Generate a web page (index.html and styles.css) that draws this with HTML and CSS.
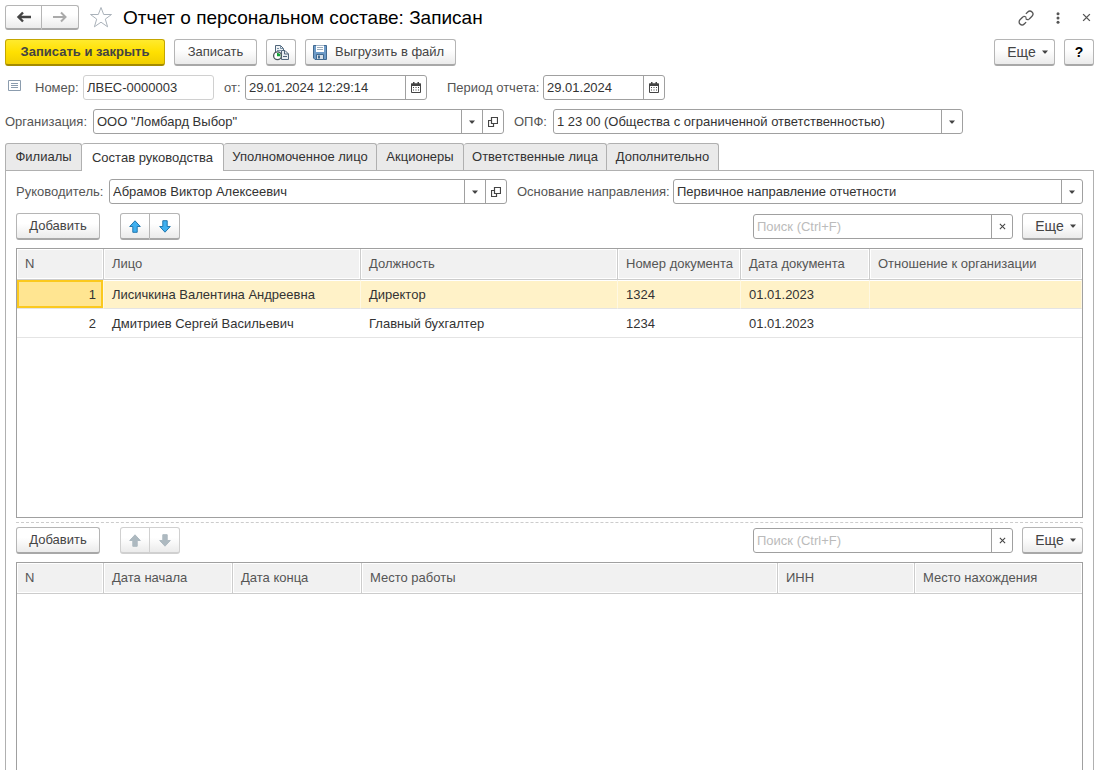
FILE: index.html
```html
<!DOCTYPE html>
<html lang="ru">
<head>
<meta charset="utf-8">
<meta name="viewport" content="width=device-width, initial-scale=1">
<title>Отчет о персональном составе</title>
<link rel="stylesheet" href="styles.css">
</head>
<body>
<svg class="sprite" aria-hidden="true">
  <symbol id="i-back" viewBox="0 0 16 12"><path d="M15 6H3M7 1.5 2.5 6 7 10.500" fill="none" stroke="currentColor" stroke-width="2.400"/></symbol>
  <symbol id="i-forward" viewBox="0 0 16 12"><path d="M1 6h12M9 1.500 13.500 6 9 10.500" fill="none" stroke="currentColor" stroke-width="2"/></symbol>
  <symbol id="i-caret" viewBox="0 0 6 4"><path d="M0 0.500h6L3.500 3.500h-1z" fill="currentColor"/></symbol>
  <symbol id="i-calendar" viewBox="0 0 10 11"><path d="M.5 2h9v8.500h-9z" fill="none" stroke="currentColor"/><path d="M0 1.500h10V4H0zM2 0h1.500v2H2zM6.500 0H8v2H6.500z" fill="currentColor"/><path d="M2 5h1v1H2zm2.500 0h1v1h-1zM7 5h1v1H7zM2 7.500h1v1H2zm2.500 0h1v1h-1zm2.500 0h1v1H7z" fill="currentColor"/></symbol>
  <symbol id="i-open" viewBox="0 0 10 10"><path d="M3.500.500h6v6h-6zM3.500 3.500h-3v6h5v-3" fill="none" stroke="currentColor" stroke-width="1.200"/></symbol>
  <symbol id="i-close" viewBox="0 0 8 8"><path d="m1 1 6 6m0-6L1 7" fill="none" stroke="currentColor" stroke-width="1.200"/></symbol>
  <symbol id="i-up" viewBox="0 0 12 13"><path d="M6 .8 11.300 6.500H8.200v5.800H3.800V6.500H.7z" stroke-width="1"/></symbol>
  <symbol id="i-down" viewBox="0 0 12 13"><path d="M6 12.200 11.300 6.500H8.200V.7H3.800v5.800H.7z" stroke-width="1"/></symbol>
</svg>

<main class="form">
  <header class="titlebar">
    <div class="pair">
      <button class="btn" type="button" aria-label="Назад"><svg class="arrow"><use href="#i-back"/></svg></button>
      <button class="btn faded" type="button" aria-label="Вперед"><svg class="arrow"><use href="#i-forward"/></svg></button>
    </div>
    <button class="ghost star" type="button" aria-label="Избранное"><svg width="24" height="23" viewBox="0 0 24 23"><path d="m12 1.500 2.700 7h7.800l-6.200 4.600 2.300 7.700L12 16.200l-6.600 4.600 2.300-7.700L1.500 8.500h7.800z" fill="#fff" stroke="#aab2ba"/></svg></button>
    <h1>Отчет о персональном составе: Записан</h1>
    <div class="window-tools">
      <button class="ghost" type="button" aria-label="Ссылка"><svg width="16" height="16" viewBox="0 0 16 16"><g transform="rotate(-45 8 8)" fill="none" stroke="#555" stroke-width="1.300"><path d="M6.800 5H2.500a3 3 0 0 0 0 6h2.700M7 5a2.800 2.800 0 0 1 1.500 3M9.200 11h4.300a3 3 0 0 0 0-6h-2.700M9 11a2.800 2.800 0 0 1-1.500-3"/></g></svg></button>
      <button class="ghost" type="button" aria-label="Меню"><svg width="4" height="12" viewBox="0 0 4 12" fill="#555"><circle cx="2" cy="1.700" r="1.500"/><circle cx="2" cy="6" r="1.500"/><circle cx="2" cy="10.300" r="1.500"/></svg></button>
      <button class="ghost" type="button" aria-label="Закрыть"><svg width="9" height="9"><use href="#i-close"/></svg></button>
    </div>
  </header>

  <div class="toolbar main-tools">
    <button class="btn primary" type="button">Записать и закрыть</button>
    <button class="btn write" type="button">Записать</button>
    <button class="btn square" type="button" aria-label="Отчеты"><svg width="18" height="17" viewBox="0 0 18 17"><path d="M3.500 10V1.500h5l3 3V13" fill="#eef2f5" stroke="#50657a"/><path d="M8.500 1.500v3h3M5 4.500h2M5 6.500h4" fill="none" stroke="#7890a5"/><path d="M9.500 6.500h3.500l3.500 3.500v5.500H9.500z" fill="#e7edf2" stroke="#50657a"/><path d="M12.500 6.500V10h4M11 12.500h4" fill="none" stroke="#50657a"/><circle cx="5.500" cy="11.800" r="3.900" fill="#fff" stroke="#4a555c" stroke-width="1.300"/><path d="M5 9h1a2.800 2.800 0 0 1 2.300 3.300H5z" fill="#13a538"/></svg></button>
    <button class="btn export" type="button"><svg width="14" height="15" viewBox="0 0 14 15"><path d="M.5.500h13v14H2L.5 13z" fill="#6d9bc8" stroke="#41698f"/><path d="M3 .5h8V7H3z" fill="#fff"/><path d="M4 2.500h6M4 4.500h6" stroke="#9aabba"/><path d="M3.500 9.500h7v5h-7z" fill="#d7dfe6" stroke="#41698f"/><path d="M5 10.500h2v3H5z" fill="#41698f"/></svg>Выгрузить в файл</button>
    <button class="btn more push" type="button">Еще<svg class="caret"><use href="#i-caret"/></svg></button>
    <button class="btn square help" type="button">?</button>
  </div>

  <div class="row">
    <svg class="note" width="14" height="12" viewBox="0 0 14 12"><path d="M.5.500h12v10H.5z" fill="#fff" stroke="#8b9cae"/><path d="M3 3.500h7M3 5.500h7M3 7.500h7" stroke="#8b9cae"/></svg>
    <label class="label-number" for="number">Номер:</label>
    <div class="field plain number"><input id="number" value="ЛВЕС-0000003"></div>
    <label class="label-from" for="date">от:</label>
    <div class="field date"><input id="date" value="29.01.2024 12:29:14"><button type="button" aria-label="Выбрать дату"><svg width="10" height="11"><use href="#i-calendar"/></svg></button></div>
    <label class="label-period" for="period">Период отчета:</label>
    <div class="field period"><input id="period" value="29.01.2024"><button type="button" aria-label="Выбрать период"><svg width="10" height="11"><use href="#i-calendar"/></svg></button></div>
  </div>

  <div class="row">
    <label class="label-org" for="org">Организация:</label>
    <div class="field combo org"><select id="org"><option>ООО "Ломбард Выбор"</option></select><span class="drop"><svg class="caret"><use href="#i-caret"/></svg></span><button type="button" aria-label="Открыть организацию"><svg width="10" height="10"><use href="#i-open"/></svg></button></div>
    <label class="label-opf" for="opf">ОПФ:</label>
    <div class="field combo opf"><select id="opf"><option>1 23 00 (Общества с ограниченной ответственностью)</option></select><span class="drop"><svg class="caret"><use href="#i-caret"/></svg></span></div>
  </div>

  <div class="tabs" role="tablist">
    <button class="tab t1" type="button" role="tab">Филиалы</button>
    <button class="tab t2 active" type="button" role="tab" aria-selected="true">Состав руководства</button>
    <button class="tab t3" type="button" role="tab">Уполномоченное лицо</button>
    <button class="tab t4" type="button" role="tab">Акционеры</button>
    <button class="tab t5" type="button" role="tab">Ответственные лица</button>
    <button class="tab t6" type="button" role="tab">Дополнительно</button>
  </div>

  <section class="panel" role="tabpanel">
    <div class="row">
      <label class="label-head" for="head">Руководитель:</label>
      <div class="field combo head"><select id="head"><option>Абрамов Виктор Алексеевич</option></select><span class="drop"><svg class="caret"><use href="#i-caret"/></svg></span><button type="button" aria-label="Открыть руководителя"><svg width="10" height="10"><use href="#i-open"/></svg></button></div>
      <label class="label-basis" for="basis">Основание направления:</label>
      <div class="field combo basis"><select id="basis"><option>Первичное направление отчетности</option></select><span class="drop"><svg class="caret"><use href="#i-caret"/></svg></span></div>
    </div>

    <div class="toolbar">
      <button class="btn add" type="button">Добавить</button>
      <div class="pair movers">
        <button class="btn" type="button" aria-label="Вверх"><svg class="mover"><use href="#i-up"/></svg></button>
        <button class="btn" type="button" aria-label="Вниз"><svg class="mover"><use href="#i-down"/></svg></button>
      </div>
      <div class="field search push"><input type="text" placeholder="Поиск (Ctrl+F)" aria-label="Поиск по составу"><button type="button" aria-label="Очистить"><svg width="7" height="7"><use href="#i-close"/></svg></button></div>
      <button class="btn more" type="button">Еще<svg class="caret"><use href="#i-caret"/></svg></button>
    </div>

    <div class="grid-box people">
      <table>
        <colgroup><col class="c-n"><col class="c-person"><col class="c-person"><col class="c-doc"><col class="c-date"><col></colgroup>
        <thead><tr><th>N</th><th>Лицо</th><th>Должность</th><th>Номер документа</th><th>Дата документа</th><th>Отношение к организации</th></tr></thead>
        <tbody>
          <tr class="selected"><td class="num current">1</td><td>Лисичкина Валентина Андреевна</td><td>Директор</td><td>1324</td><td>01.01.2023</td><td></td></tr>
          <tr><td class="num">2</td><td>Дмитриев Сергей Васильевич</td><td>Главный бухгалтер</td><td>1234</td><td>01.01.2023</td><td></td></tr>
        </tbody>
      </table>
    </div>

    <div class="splitter"></div>

    <div class="toolbar">
      <button class="btn add" type="button">Добавить</button>
      <div class="pair movers inactive">
        <button class="btn" type="button" disabled aria-label="Вверх"><svg class="mover"><use href="#i-up"/></svg></button>
        <button class="btn" type="button" disabled aria-label="Вниз"><svg class="mover"><use href="#i-down"/></svg></button>
      </div>
      <div class="field search push"><input type="text" placeholder="Поиск (Ctrl+F)" aria-label="Поиск по местам работы"><button type="button" aria-label="Очистить"><svg width="7" height="7"><use href="#i-close"/></svg></button></div>
      <button class="btn more" type="button">Еще<svg class="caret"><use href="#i-caret"/></svg></button>
    </div>

    <div class="grid-box jobs">
      <table>
        <colgroup><col class="c-n"><col class="c-date"><col class="c-date"><col><col class="c-inn"><col class="c-place"></colgroup>
        <thead><tr><th>N</th><th>Дата начала</th><th>Дата конца</th><th>Место работы</th><th>ИНН</th><th>Место нахождения</th></tr></thead>
      </table>
    </div>
  </section>
</main>
</body>
</html>
```
FILE: styles.css
```css
* { box-sizing: border-box; }

body {
  margin: 0;
  background: #fff;
  color: #333;
  font: 13px/16px "Liberation Sans", Arial, sans-serif;
}

button, input, select { font: inherit; color: inherit; }
svg { display: block; flex: none; }
.sprite { position: absolute; width: 0; height: 0; }

.form {
  display: flex;
  flex-direction: column;
  min-height: 100vh;
  padding: 5px 3px 3px 5px;
}

/* Buttons */
.btn {
  display: flex;
  align-items: center;
  justify-content: center;
  height: 27px;
  padding: 0 10px;
  border: 1px solid #b5b5b5;
  border-bottom: 2px solid #a8a8a8;
  border-radius: 3px;
  background: linear-gradient(#fff 40%, #ebebeb);
  color: #444;
  white-space: nowrap;
}
.btn.primary {
  width: 160px;
  padding: 0;
  border-color: #c4a600 #c4a600 #a48b00;
  background: linear-gradient(#ffea2e, #ffe000 50%, #f0ce00);
  font-weight: bold;
}
.btn.write { width: 83px; }
.btn.square { width: 30px; padding: 0; }
.btn.help { color: #000; font-size: 14px; font-weight: bold; }
.btn.export { gap: 8px; justify-content: flex-start; width: 151px; padding: 0 7px; }
.btn.more { gap: 6px; width: 61px; padding: 0 0 0 6px; font-size: 14px; }
.btn.add { width: 84px; padding: 0; }
.push { margin-left: auto; }

.ghost {
  display: flex;
  padding: 0;
  border: 0;
  background: none;
}

.pair { display: flex; }
.pair .btn { width: 37px; height: 25px; padding: 0; }
.pair .btn:first-child { border-radius: 3px 0 0 3px; }
.pair .btn:last-child { border-left: 0; border-radius: 0 3px 3px 0; }
.pair .faded { color: #aaa; }
.arrow { width: 16px; height: 12px; }
.caret { width: 6px; height: 4px; }

.movers { margin-left: 11px; }
.movers .btn { width: 30px; height: 27px; }
.mover { width: 12px; height: 13px; fill: #3fb0f0; stroke: #2277ae; }
.inactive .btn { border-color: #d0d0d0; }
.inactive .mover { fill: #adb9c0; stroke: #adb9c0; }

/* Title */
.titlebar { display: flex; align-items: center; height: 25px; }
.star { margin-left: 10px; }
h1 {
  margin: 0 0 0 10px;
  color: #000;
  font-size: 19px;
  font-weight: normal;
  line-height: 24px;
  white-space: nowrap;
}
.window-tools {
  display: flex;
  align-items: center;
  gap: 22px;
  margin-left: auto;
  padding-right: 3px;
  color: #555;
}

/* Bars and rows */
.toolbar { display: flex; align-items: center; gap: 9px; }
.main-tools { margin-top: 9px; }
.row { display: flex; align-items: center; margin-top: 9px; }
.row label { flex: none; color: #555; white-space: nowrap; }
.note { margin: 0 13px 4px 3px; }

.label-number { width: 48px; }
.label-from { width: 21px; margin-left: 10px; }
.label-period { width: 96px; margin-left: 20px; }
.label-org { width: 88px; }
.label-opf { width: 39px; margin-left: 10px; }
.label-head { width: 93px; }
.label-basis { width: 156px; margin-left: 10px; }

/* Fields */
.field {
  display: flex;
  height: 25px;
  border: 1px solid #a0a0a0;
  border-radius: 3px;
  background: #fff;
  color: #333;
}
.field.plain { border-color: #d0d0d0; }
.field input,
.field select {
  flex: 1;
  min-width: 0;
  padding: 0 3px;
  border: 0;
  background: none;
  appearance: none;
  outline: 0;
}
.field button,
.drop {
  display: flex;
  align-items: center;
  justify-content: center;
  width: 21px;
  padding: 0;
  border: 0;
  border-left: 1px solid #a0a0a0;
  background: none;
  color: #444;
}
.field.combo {
  display: grid;
  grid-template-rows: 100%;
  grid-template-columns: 1fr 21px;
  grid-auto-columns: 21px;
}
.combo select { grid-area: 1 / 1 / 2 / 3; }
.combo .drop { grid-area: 1 / 2; pointer-events: none; }
.combo button { grid-area: 1 / 3; }
.number { width: 131px; }
.date { width: 182px; }
.period { width: 122px; }
.org { flex: 0 1 411px; }
.opf { flex: 0 1 410px; }
.head { flex: 0 1 398px; }
.basis { flex: 1; }
.search { width: 260px; }
.search input::placeholder { color: #bbb; opacity: 1; }

/* Tabs */
.tabs { display: flex; margin-top: 9px; }
.tab {
  height: 27px;
  padding: 0;
  border: 1px solid #b0b0b0;
  border-width: 1px 1px 0 0;
  border-radius: 3px 3px 0 0;
  background: #eaeaea;
  white-space: nowrap;
}
.tab:first-child { border-left-width: 1px; }
.tab.active { z-index: 1; height: 28px; margin-bottom: -1px; background: #fff; }
.t1 { width: 77px; }
.t2 { width: 142px; }
.t3 { width: 153px; }
.t4 { width: 87px; }
.t5 { width: 143px; }
.t6 { width: 112px; }

.panel {
  display: flex;
  flex: 1;
  flex-direction: column;
  padding: 0 10px;
  border: 1px solid #b0b0b0;
  border-bottom: 0;
}
.panel > .row { margin: 8px 0 9px; }

/* Tables */
.grid-box { margin-top: 8px; border: 1px solid #a0a0a0; }
.people { min-height: 270px; }
.jobs { flex: 1; border-bottom: 0; }
.splitter { margin: 4px 0; border-top: 1px dashed #ccc; }

table {
  width: 100%;
  border-collapse: separate;
  border-spacing: 0;
  table-layout: fixed;
}
th, td {
  padding: 0 8px;
  overflow: hidden;
  text-align: left;
  white-space: nowrap;
}
th {
  height: 31px;
  border-right: 1px solid #ccc;
  border-bottom: 1px solid #ccc;
  background: #f1f1f1;
  box-shadow: inset 0 0 0 1px #fff;
  color: #555;
  font-weight: normal;
}
th:last-child { border-right: 0; }
td { height: 29px; padding-top: 2px; border-bottom: 1px solid #e4e4e4; }
.selected td { border-right: 1px solid #fff8e3; background: #fff2c8; box-shadow: inset 0 1px #fff; }
td.num { text-align: right; }
.selected .current { padding-right: 7px; background: #ffe591; box-shadow: inset 0 0 0 2px #fbc91e; }
.c-n { width: 87px; }
.c-person { width: 257px; }
.c-doc { width: 123px; }
.c-date { width: 129px; }
.c-inn { width: 137px; }
.c-place { width: 167px; }
```
